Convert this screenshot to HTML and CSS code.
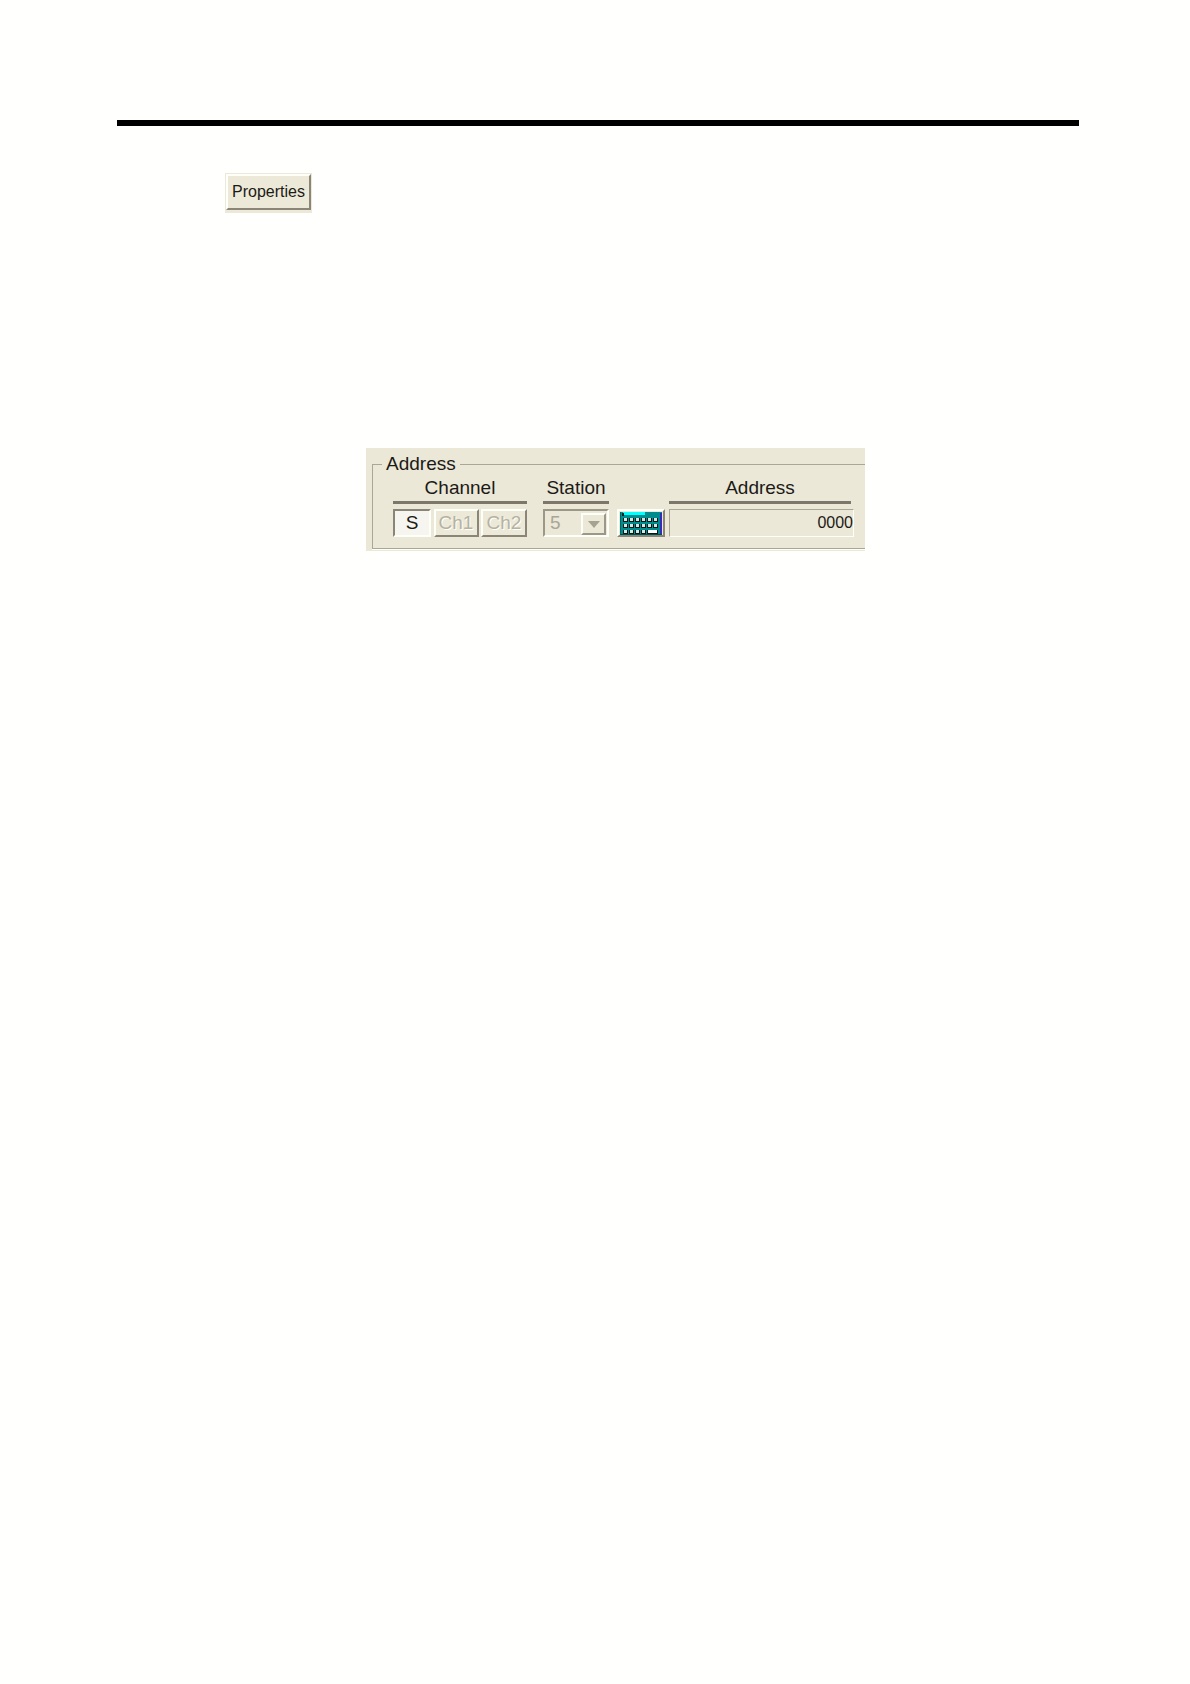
FILE: index.html
```html
<!DOCTYPE html>
<html lang="en">
<head>
<meta charset="UTF-8">
<meta name="viewport" content="width=device-width, initial-scale=1.0">
<title>Address properties</title>
<link rel="stylesheet" href="styles.css">
</head>
<body>

<hr class="page-rule">

<main>
  <div class="properties-box">
    <button type="button" class="btn properties-btn">Properties</button>
  </div>

  <form class="address-panel">
    <fieldset class="address-group">
      <legend>Address</legend>
      <div class="address-fields">

        <div class="field" role="group" aria-labelledby="channelTitle">
          <span class="field-title" id="channelTitle">Channel</span>
          <div class="channel-buttons">
            <button type="button" class="btn btn-pressed" aria-pressed="true">S</button>
            <button type="button" class="btn" disabled>Ch1</button>
            <button type="button" class="btn" disabled>Ch2</button>
          </div>
        </div>

        <div class="field station">
          <label class="field-title" for="station">Station</label>
          <div class="select-wrap">
            <select id="station" disabled>
              <option selected>5</option>
            </select>
            <span class="select-arrow">
              <svg width="12" height="7" viewBox="0 0 12 7"><path d="M0 0h12L6 7z" fill="#a5a293"/></svg>
            </span>
          </div>
        </div>

        <button type="button" class="btn keypad-btn" aria-label="Keypad">
          <svg width="42" height="23" viewBox="0 0 42 23">
            <defs>
              <g id="key">
                <path d="M0 0h5v4H0z" fill="#001818"/>
                <path d="M1 0h3v3H1z" fill="#d2e8e4"/>
              </g>
              <g id="keyRow">
                <use href="#key" x="3"/>
                <use href="#key" x="9"/>
                <use href="#key" x="15"/>
                <use href="#key" x="21"/>
              </g>
            </defs>
            <path d="M0 0h42v23H0z" fill="#008c8c"/>
            <path d="M3 0h22v3H3z" fill="#00ffff"/>
            <path d="M0 0h1v23H0z" fill="#006464"/>
            <path d="M2 1h2v3H2z" fill="#002020"/>
            <use href="#keyRow" y="6"/>
            <use href="#key" x="27" y="6"/>
            <use href="#key" x="33" y="6"/>
            <use href="#keyRow" y="12"/>
            <use href="#key" x="27" y="12"/>
            <use href="#key" x="33" y="12"/>
            <use href="#keyRow" y="18"/>
            <path d="M27 18h11v4H27z" fill="#001818"/>
            <path d="M28 18h9v3h-9z" fill="#ffffff"/>
            <path d="M40 1h2v22h-2z" fill="#3a28b8"/>
            <path d="M0 22h42v1H0z" fill="#005050"/>
          </svg>
        </button>

        <div class="field address">
          <label class="field-title" for="address">Address</label>
          <input type="text" id="address" value="0000" readonly>
        </div>

      </div>
    </fieldset>
  </form>
</main>

</body>
</html>
```
FILE: styles.css
```css
* {
  box-sizing: border-box;
}

body {
  margin: 0;
  padding: 120px 111px 40px 117px;
  background: #fffffe;
  color: #1c1a16;
  font-family: "Liberation Sans", Arial, sans-serif;
  font-size: 19px;
  line-height: 20px;
}

.page-rule {
  height: 6px;
  margin: 0 0 47px;
  border: none;
  background: #000;
}

/* raised buttons */
.btn {
  margin: 0;
  padding: 0;
  border: 2px solid;
  border-color: #fffffa #8a8576 #8a8576 #fffffa;
  background: #ece9d8;
  color: #1c1a16;
  font: inherit;
}

.btn:disabled {
  color: #b5b2a2;
  text-shadow: 1px 1px 0 #fffffa;
}

.btn-pressed {
  border-color: #8a8576 #fffffa #fffffa #8a8576;
  background: #f6f5ef;
}

.properties-box {
  width: 87px;
  margin-left: 108px;
  padding: 1px 1px 3px;
  background: #ece9d8;
}

.properties-btn {
  display: block;
  width: 100%;
  height: 36px;
  font-size: 16px;
}

.address-panel {
  width: 499px;
  max-width: 100%;
  margin: 235px 0 0 249px;
  padding: 6px 0 2px 6px;
  background: #ebe8d8;
}

.address-group {
  min-width: 0;
  margin: 0;
  padding: 4px 11px 11px 20px;
  border: 1px solid #aaa797;
  border-right: none;
  box-shadow: 0 1px 0 #fffffa;
}

.address-group legend {
  margin-left: -11px;
  padding: 0 4px;
}

.address-fields {
  display: grid;
  grid-template-columns: 134px 82px 60px 1fr;
  align-items: end;
}

.field {
  display: flex;
  flex-direction: column;
}

.field-title {
  margin-bottom: 5px;
  padding-bottom: 3px;
  border-bottom: 3px solid #7c776a;
  text-align: center;
}

.channel-buttons {
  display: grid;
  grid-template-columns: 38px 45px 46px;
  justify-content: space-between;
  height: 28px;
}

.station {
  margin-left: 16px;
}

.select-wrap {
  position: relative;
  height: 28px;
}

select,
input {
  width: 100%;
  height: 28px;
  margin: 0;
  border: 2px solid;
  border-radius: 0;
  background: #ebe8d8;
  font: inherit;
}

select {
  appearance: none;
  padding: 0 5px;
  border-color: #9c9888 #fffffa #fffffa #9c9888;
  color: #a9a696;
  opacity: 1;
}

/* drop-down button, lies over the select */
.select-arrow {
  position: absolute;
  top: 4px;
  right: 3px;
  bottom: 2px;
  display: flex;
  align-items: center;
  justify-content: center;
  width: 25px;
  border: 2px solid;
  border-color: #fffffa #9c9888 #9c9888 #fffffa;
  background: #ebe8d8;
  pointer-events: none;
}

.keypad-btn {
  display: flex;
  align-items: center;
  justify-content: center;
  height: 28px;
  margin: 0 4px 0 8px;
}

.address .field-title {
  margin-right: 3px;
}

input {
  padding: 0;
  border-width: 1px;
  border-color: #aaa797 #fffffa #fffffa #aaa797;
  color: #1c1a16;
  font-size: 16px;
  text-align: right;
}
```
